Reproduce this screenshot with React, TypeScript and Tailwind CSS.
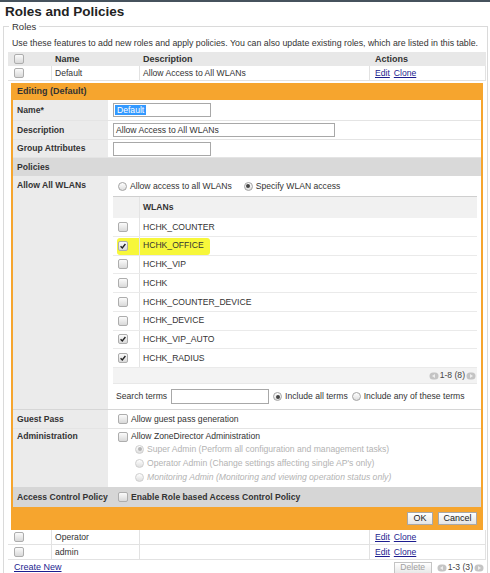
import React from "react";

const link = "text-[#1d1d8f] underline";

function Check({ checked = false }: { checked?: boolean }) {
  return (
    <span className="inline-flex h-[10px] w-[10px] shrink-0 items-center justify-center rounded-[2px] border border-[#adadad] bg-linear-to-b from-[#fbfbfb] to-[#d9d9d9]">
      {checked && (
        <svg viewBox="0 0 10 10" className="h-[8px] w-[8px]">
          <path d="M2 5.3 L4.1 7.4 L8 2.5" stroke="#222" strokeWidth="1.7" fill="none" />
        </svg>
      )}
    </span>
  );
}

function Radio({ checked = false, faded = false }: { checked?: boolean; faded?: boolean }) {
  return (
    <span
      className={`inline-flex h-[9px] w-[9px] shrink-0 items-center justify-center rounded-full border bg-linear-to-b from-white to-[#dedede] ${
        faded ? "border-[#cfcfcf]" : "border-[#a3a3a3]"
      }`}
    >
      {checked && <span className={`h-[4px] w-[4px] rounded-full ${faded ? "bg-[#b5b5b5]" : "bg-[#444]"}`} />}
    </span>
  );
}

function PagerArrow({ dir }: { dir: "left" | "right" }) {
  return (
    <svg viewBox="0 0 10 8" className="h-[8px] w-[10px]">
      <rect x="0.5" y="0.5" width="9" height="7" rx="3.5" fill="#c4c4c4" />
      {dir === "left" ? <path d="M3 4 L6 2 L6 6 Z" fill="#eee" /> : <path d="M7 4 L4 2 L4 6 Z" fill="#eee" />}
    </svg>
  );
}

function Pager({ label }: { label: string }) {
  return (
    <span className="inline-flex items-center gap-[1px] text-[#444]">
      <PagerArrow dir="left" />
      <span>{label}</span>
      <PagerArrow dir="right" />
    </span>
  );
}

function RoleRow({ name, desc = "" }: { name: string; desc?: string }) {
  return (
    <div className="flex h-[15px] border-b border-[#e2e2e2]">
      <div className="flex w-[44px] items-center border-r border-[#e2e2e2] pl-[6px]">
        <Check />
      </div>
      <div className="flex w-[88px] items-center border-r border-[#e2e2e2] pl-[3px]">{name}</div>
      <div className="flex w-[230px] items-center border-r border-[#e2e2e2] pl-[3px]">{desc}</div>
      <div className="flex flex-1 items-center gap-[4px] border-r border-[#e2e2e2] pl-[5px]">
        <span className={link}>Edit</span>
        <span className={link}>Clone</span>
      </div>
    </div>
  );
}

const wlans: { name: string; checked: boolean; mark?: boolean }[] = [
  { name: "HCHK_COUNTER", checked: false },
  { name: "HCHK_OFFICE", checked: true, mark: true },
  { name: "HCHK_VIP", checked: false },
  { name: "HCHK", checked: false },
  { name: "HCHK_COUNTER_DEVICE", checked: false },
  { name: "HCHK_DEVICE", checked: false },
  { name: "HCHK_VIP_AUTO", checked: true },
  { name: "HCHK_RADIUS", checked: true },
];

const label = "bg-[#ebebeb] pl-[4px] font-bold text-[#333]";

export default function App() {
  return (
    <div className="h-[573px] w-[490px] overflow-hidden bg-white font-['Liberation_Sans',Arial,sans-serif] text-[8.6px] leading-none text-[#333]">
      <div className="h-[2px] bg-[#46525d]" />
      <h1 className="pl-[5px] pt-[2px] text-[13.5px] font-bold leading-[15px] text-[#222]">Roles and Policies</h1>

      <fieldset className="ml-[3px] mr-[2px] mt-[2px] border border-b-0 border-[#dadada] pl-[4px] pr-[1px]">
        <legend className="ml-[1px] px-[3px] text-[9.5px] leading-[11px] text-[#333]">Roles</legend>

        <p className="mt-[6px] whitespace-nowrap pl-[4px] text-[8.8px] leading-[10px]">
          Use these features to add new roles and apply policies. You can also update existing roles, which are listed in this table.
        </p>

        {/* roles table */}
        <div className="mt-[4px]">
          <div className="flex h-[14px] bg-[#e8e8e8] text-[9px] font-bold text-[#333]">
            <div className="flex w-[44px] items-center pl-[6px]">
              <Check />
            </div>
            <div className="flex w-[88px] items-center pl-[3px]">Name</div>
            <div className="flex w-[230px] items-center pl-[3px]">Description</div>
            <div className="flex flex-1 items-center pl-[5px]">Actions</div>
          </div>
          <RoleRow name="Default" desc="Allow Access to All WLANs" />

          {/* editing panel */}
          <div className="mx-[3px] mt-[2px] bg-[#f6a52e] px-[2px]">
            <div className="flex h-[17px] items-center pl-[4px] text-[9px] font-bold text-[#333]">Editing (Default)</div>

            <div className="bg-white">
              <div className="flex h-[21px] border-b border-[#e4e4e4]">
                <div className={`flex w-[95px] items-center ${label}`}>Name*</div>
                <div className="flex flex-1 items-center pl-[5px]">
                  <span className="flex h-[14px] w-[98px] items-center border border-[#a8a8a8] pl-[1px]">
                    <span className="bg-[#3399ff] px-[2px] py-[1px] text-white">Default</span>
                  </span>
                </div>
              </div>
              <div className="flex h-[19px] border-b border-[#e4e4e4]">
                <div className={`flex w-[95px] items-center ${label}`}>Description</div>
                <div className="flex flex-1 items-center pl-[5px]">
                  <span className="flex h-[14px] w-[222px] items-center border border-[#a8a8a8] pl-[2px]">
                    Allow Access to All WLANs
                  </span>
                </div>
              </div>
              <div className="flex h-[18px] border-b border-[#e4e4e4]">
                <div className={`flex w-[95px] items-center ${label}`}>Group Attributes</div>
                <div className="flex flex-1 items-center pl-[5px]">
                  <span className="h-[14px] w-[98px] border border-[#a8a8a8]" />
                </div>
              </div>
              <div className="flex h-[18px] items-center bg-[#d9d9d9] pl-[4px] font-bold text-[#333]">Policies</div>

              {/* WLAN access */}
              <div className="flex border-b border-[#d6d6d6]">
                <div className={`w-[95px] pt-[5px] ${label}`}>Allow All WLANs</div>
                <div className="flex-1">
                  <div className="flex h-[20px] items-center gap-[3px] pl-[10px]">
                    <Radio />
                    <span className="mr-[9px]">Allow access to all WLANs</span>
                    <Radio checked />
                    <span>Specify WLAN access</span>
                  </div>
                  <div className="ml-[5px] mr-[4px] border-t border-[#cfcfcf]">
                    <div className="flex h-[21px] bg-[#f1f1f1]">
                      <div className="w-[27px] border-r border-[#e4e4e4]" />
                      <div className="flex items-center pl-[3px] font-bold text-[#333]">WLANs</div>
                    </div>
                    {wlans.map((w) => (
                      <div key={w.name} className="relative flex h-[18.75px] border-b border-[#eaeaea]">
                        {w.mark && <span className="absolute left-[4px] top-[1px] h-[17px] w-[93px] rounded-[3px] bg-[#f7f73a]" />}
                        <div className="relative flex w-[27px] items-center border-r border-[#e4e4e4] pl-[5px]">
                          <Check checked={w.checked} />
                        </div>
                        <div className="relative flex items-center pl-[3px]">{w.name}</div>
                      </div>
                    ))}
                    <div className="flex h-[16px] items-center justify-end border-b border-[#e8e8e8] bg-[#f3f3f3] pr-[1px]">
                      <Pager label="1-8 (8)" />
                    </div>
                    <div className="flex h-[25px] items-center pl-[3px]">
                      <span className="mr-[4px]">Search terms</span>
                      <span className="mr-[4px] h-[15px] w-[98px] border border-[#a8a8a8]" />
                      <Radio checked />
                      <span className="ml-[3px] mr-[4px]">Include all terms</span>
                      <Radio />
                      <span className="ml-[3px]">Include any of these terms</span>
                    </div>
                  </div>
                </div>
              </div>

              <div className="flex h-[19px] border-b border-[#e4e4e4]">
                <div className={`flex w-[95px] items-center ${label}`}>Guest Pass</div>
                <div className="flex flex-1 items-center gap-[3px] pl-[10px]">
                  <Check />
                  <span>Allow guest pass generation</span>
                </div>
              </div>

              <div className="flex h-[58px]">
                <div className={`w-[95px] pt-[3px] ${label}`}>Administration</div>
                <div className="flex-1 pl-[10px] pt-[2px]">
                  <div className="flex h-[11px] items-center gap-[3px]">
                    <Check />
                    <span>Allow ZoneDirector Administration</span>
                  </div>
                  <div className="pl-[17px] text-[#b3b3b3]">
                    <div className="flex h-[14px] items-center gap-[3px]">
                      <Radio checked faded />
                      <span>Super Admin (Perform all configuration and management tasks)</span>
                    </div>
                    <div className="flex h-[14px] items-center gap-[3px]">
                      <Radio faded />
                      <span>Operator Admin (Change settings affecting single AP's only)</span>
                    </div>
                    <div className="flex h-[14px] items-center gap-[3px]">
                      <Radio faded />
                      <span className="italic">Monitoring Admin (Monitoring and viewing operation status only)</span>
                    </div>
                  </div>
                </div>
              </div>

              <div className="flex h-[20px] bg-[#d6d6d6]">
                <div className="flex w-[95px] items-center pl-[4px] font-bold text-[#333]">Access Control Policy</div>
                <div className="flex flex-1 items-center gap-[3px] pl-[10px] font-bold text-[#333]">
                  <Check />
                  <span>Enable Role based Access Control Policy</span>
                </div>
              </div>
            </div>

            <div className="flex h-[23px] items-center justify-end gap-[5px] pr-[4px]">
              <span className="flex h-[13px] w-[26px] items-center justify-center border border-[#a8a8a8] bg-linear-to-b from-white to-[#e4e4e4] text-[9px] text-[#222]">
                OK
              </span>
              <span className="flex h-[13px] w-[39px] items-center justify-center border border-[#a8a8a8] bg-linear-to-b from-white to-[#e4e4e4] text-[9px] text-[#222]">
                Cancel
              </span>
            </div>
          </div>

          <RoleRow name="Operator" />
          <RoleRow name="admin" />
          <div className="flex h-[15px] items-center justify-between pl-[6px] pr-[2px]">
            <span className={`${link} text-[9px]`}>Create New</span>
            <div className="flex items-center gap-[5px]">
              <span className="flex h-[12px] w-[38px] items-center justify-center border border-[#c4c4c4] bg-linear-to-b from-white to-[#e8e8e8] text-[#a0a0a0]">
                Delete
              </span>
              <Pager label="1-3 (3)" />
            </div>
          </div>
        </div>
      </fieldset>
    </div>
  );
}
